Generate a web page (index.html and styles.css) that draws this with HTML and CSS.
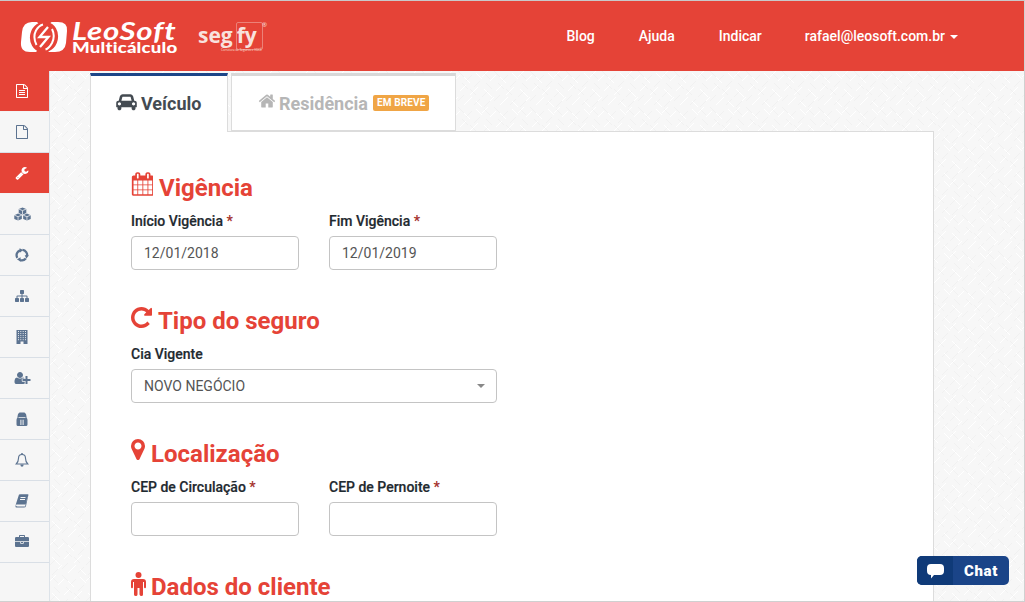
FILE: index.html
```html
<!DOCTYPE html>
<html lang="pt-BR">
<head>
<meta charset="utf-8">
<title>LeoSoft Multicálculo</title>
<link rel="stylesheet" href="styles.css">
</head>
<body>
<div class="app">
  <header class="topbar">
    <div class="brand">
      <svg class="logo-mark" viewBox="0 0 48 30" aria-hidden="true">
        <path fill="#fff" d="M12 0H38Q48 0 47 9L46 21Q45 30 35 30H10Q0 30 1 20L2 10Q3 0 12 0Z"/>
        <ellipse fill="#e54337" cx="24" cy="15" rx="14" ry="15.500" transform="rotate(12 24 15)"/>
        <path fill="#e54337" d="M16 -1H33L29 2H19ZM15 31H30L27 28H18Z"/>
        <path fill="none" stroke="#fff" stroke-width="2" d="M16.500 23Q12.500 15 16 8.500Q19 3.500 23 2.500M32 7Q35.500 14 32 21Q29 26.500 25.500 27.500"/>
        <path fill="none" stroke="#fff" stroke-width="2.300" stroke-linejoin="miter" d="M28 5L19.500 15H28.500L20 25"/>
      </svg>
      <div class="logo-words">
        <span class="logo-top">LeoSoft</span>
        <span class="logo-bottom">Multicálculo</span>
      </div>
      <div class="segfy">
        <span class="segfy-seg">seg</span><span class="segfy-fy">fy</span><span class="segfy-r">®</span>
        <span class="segfy-sub">Corretora de Seguros e VOCÊ</span>
      </div>
    </div>
    <nav class="topnav">
      <a>Blog</a>
      <a>Ajuda</a>
      <a>Indicar</a>
      <a class="user">rafael@leosoft.com.br <i class="caret"></i></a>
    </nav>
  </header>

  <div class="body-row">
    <aside class="sidebar">
      <a class="side-item on"><svg class="ico" viewBox="0 0 1792 1792"><path d="M1596 380q28 28 48 76t20 88v1152q0 40-28 68t-68 28h-1344q-40 0-68-28t-28-68v-1600q0-40 28-68t68-28h896q40 0 88 20t76 48zm-444-244v376h376q-10-29-22-41l-313-313q-12-12-41-22zm384 1528v-1024h-416q-40 0-68-28t-28-68v-416h-768v1536h1280zm-1024-864q0-14 9-23t23-9h704q14 0 23 9t9 23v64q0 14-9 23t-23 9h-704q-14 0-23-9t-9-23v-64zm736 224q14 0 23 9t9 23v64q0 14-9 23t-23 9h-704q-14 0-23-9t-9-23v-64q0-14 9-23t23-9h704zm0 256q14 0 23 9t9 23v64q0 14-9 23t-23 9h-704q-14 0-23-9t-9-23v-64q0-14 9-23t23-9h704z"/></svg></a>
      <a class="side-item"><svg class="ico" viewBox="0 0 1792 1792"><path d="M1596 380q28 28 48 76t20 88v1152q0 40-28 68t-68 28h-1344q-40 0-68-28t-28-68v-1600q0-40 28-68t68-28h896q40 0 88 20t76 48zm-444-244v376h376q-10-29-22-41l-313-313q-12-12-41-22zm384 1528v-1024h-416q-40 0-68-28t-28-68v-416h-768v1536h1280z"/></svg></a>
      <a class="side-item on"><svg class="ico" viewBox="0 0 1792 1792"><path d="M448 1472q0-26-19-45t-45-19-45 19-19 45 19 45 45 19 45-19 19-45zm644-420l-682 682q-37 37-90 37-52 0-91-37l-106-108q-38-36-38-90 0-53 38-91l681-681q39 98 114.500 173.500t173.500 114.500zm634-435q0 39-23 106-47 134-164.500 217.500t-258.500 83.500q-185 0-316.500-131.500t-131.500-316.500 131.500-316.500 316.500-131.500q58 0 121.500 16.500t107.500 46.500q16 11 16 28t-16 28l-293 169v224l193 107q5-3 79-48.500t135.500-81 70.500-35.500q15 0 23.500 10t8.500 25z"/></svg></a>
      <a class="side-item"><svg class="ico ico-wide" viewBox="0 0 18 14"><path d="M9 0L13 1.700V6L9 7.700 5 6V1.700Z"/><path d="M4.300 6.500L8.300 8.200V12.300L4.300 14 .3 12.300V8.200Z"/><path d="M13.700 6.500L17.700 8.200V12.300L13.700 14 9.700 12.300V8.200Z"/><path fill="none" stroke="#f6f6f6" stroke-width=".8" d="M5 1.700L9 3.400 13 1.700M9 3.400V7.700M.3 8.200L4.300 9.900 8.300 8.200M4.300 9.900V14M9.700 8.200L13.700 9.900 17.700 8.200M13.700 9.900V14"/></svg></a>
      <a class="side-item"><svg class="ico" viewBox="0 0 14 14"><g fill="none" stroke="currentColor" stroke-width="2.300"><path d="M2.300 9.800A5.200 5.200 0 0 1 5 2.300"/><path d="M7.500 1.900A5.200 5.200 0 0 1 12 8.300"/><path d="M10.800 10.500A5.200 5.200 0 0 1 5 12"/></g><path d="M4.500 .2L8.200 2 4.800 4.700ZM13.800 7.200L11.400 10.800 9.700 7.200ZM5.600 9.300V13.800L1.900 11.300Z"/></svg></a>
      <a class="side-item"><svg class="ico" viewBox="0 0 1792 1792"><path d="M1792 1248v320q0 40-28 68t-68 28h-320q-40 0-68-28t-28-68v-320q0-40 28-68t68-28h96v-192h-512v192h96q40 0 68 28t28 68v320q0 40-28 68t-68 28h-320q-40 0-68-28t-28-68v-320q0-40 28-68t68-28h96v-192h-512v192h96q40 0 68 28t28 68v320q0 40-28 68t-68 28h-320q-40 0-68-28t-28-68v-320q0-40 28-68t68-28h96v-192q0-52 38-90t90-38h512v-192h-96q-40 0-68-28t-28-68v-320q0-40 28-68t68-28h320q40 0 68 28t28 68v320q0 40-28 68t-68 28h-96v192h512q52 0 90 38t38 90v192h96q40 0 68 28t28 68z"/></svg></a>
      <a class="side-item"><svg class="ico" viewBox="0 0 14 14"><path d="M1.500 0H12.500V14H1.500Z"/><path fill="none" stroke="#f6f6f6" stroke-width=".9" stroke-dasharray="1 1.050" d="M3.500 1V10.500M5.800 1V10.500M8.200 1V10.500M10.500 1V10.500"/><path fill="#f6f6f6" d="M5.500 11.500H8.500V14H5.500Z"/></svg></a>
      <a class="side-item"><svg class="ico ico-wide" viewBox="0 0 2048 1792"><path d="M704 896q-159 0-271.500-112.500t-112.500-271.500 112.500-271.500 271.500-112.500 271.500 112.500 112.500 271.500-112.500 271.500-271.500 112.500zm960 128h352q13 0 22.500 9.500t9.500 22.500v192q0 13-9.500 22.500t-22.500 9.500h-352v352q0 13-9.500 22.500t-22.500 9.500h-192q-13 0-22.500-9.500t-9.500-22.500v-352h-352q-13 0-22.500-9.500t-9.500-22.500v-192q0-13 9.500-22.500t22.500-9.500h352v-352q0-13 9.500-22.500t22.500-9.500h192q13 0 22.500 9.500t9.500 22.500v352zm-736 224q0 52 38 90t90 38h256v238q-68 50-171 50h-874q-121 0-194-69t-73-190q0-53 3.500-103.500t14-109 26.500-108.500 43-97.500 62-81 85.500-53.500 111.500-20q19 0 39 17 79 61 154.500 91.500t164.500 30.500 164.500-30.500 154.500-91.500q20-17 39-17 78 0 133 33t91 95h-229q-52 0-90 38t-38 90v192z"/></svg></a>
      <a class="side-item"><svg class="ico" viewBox="0 0 14 14"><path fill-rule="evenodd" d="M4.500 .5H9.500Q11.500 1.500 11.500 4.500V5.500Q12.500 6.500 12.500 8V12.500Q12.500 14 11 14H3Q1.500 14 1.500 12.500V8Q1.500 6.500 2.500 5.500V4.500Q2.500 1.500 4.500 .5ZM3.500 5.300V6.100H10.500V5.300ZM5.400 7.800V13H6.400V7.800ZM7.600 7.800V13H8.600V7.800Z"/></svg></a>
      <a class="side-item"><svg class="ico" viewBox="0 0 14 14"><path fill="none" stroke="currentColor" stroke-width="1.150" d="M7 1.500C4.500 1.500 3.500 3.300 3.500 5.200C3.500 8 2.700 9.500 1.200 11H12.800C11.300 9.500 10.500 8 10.500 5.200C10.500 3.300 9.500 1.500 7 1.500Z"/><circle cx="7" cy="1" r="1"/><path d="M5.300 11.500H8.700Q8.500 13.700 7 13.700T5.300 11.500Z"/></svg></a>
      <a class="side-item"><svg class="ico" viewBox="0 0 14 14"><path d="M4 .5H13.500L11 12Q10.700 13.500 9 13.500H1.500Q.2 13.500 .5 12L.8 10.700 1 11.500Q1.300 12.500 2.500 12.500H9.500Q10 12.500 10.200 12L12.500 2.500 13 3Z"/><path fill-rule="evenodd" d="M4 .5H13L10.700 10.500H2L.7 10.800ZM5.500 3V4H10.500V3ZM5 5V6H10V5Z"/></svg></a>
      <a class="side-item"><svg class="ico" viewBox="0 0 1792 1792"><path d="M640 256h512v-128h-512v128zm1152 640v480q0 66-47 113t-113 47h-1472q-66 0-113-47t-47-113v-480h672v160q0 26 19 45t45 19h320q26 0 45-19t19-45v-160h672zm-768 0v128h-256v-128h256zm768-480v384h-1792v-384q0-66 47-113t113-47h352v-160q0-40 28-68t68-28h576q40 0 68 28t28 68v160h352q66 0 113 47t47 113z"/></svg></a>
    </aside>

    <main class="content">
      <div class="tabs">
        <a class="tab tab-active">
          <svg class="tab-ico" viewBox="0 0 2048 1792"><path d="M480 1088q0-66-47-113t-113-47-113 47-47 113 47 113 113 47 113-47 47-113zm36-320h1016l-89-357q-2-8-14-17.500t-21-9.500h-768q-9 0-21 9.500t-14 17.500zm1372 320q0-66-47-113t-113-47-113 47-47 113 47 113 113 47 113-47 47-113zm160-96v384q0 14-9 23t-23 9h-96v128q0 80-56 136t-136 56-136-56-56-136v-128h-1024v128q0 80-56 136t-136 56-136-56-56-136v-128h-96q-14 0-23-9t-9-23v-384q0-93 65.500-158.500t158.500-65.500h28l105-419q23-94 104-157.500t179-63.500h768q98 0 179 63.500t104 157.500l105 419h28q93 0 158.500 65.500t65.500 158.500z"/></svg>
          Veículo
        </a>
        <a class="tab tab-off">
          <svg class="tab-ico" viewBox="0 0 1792 1792"><path d="M1472 992v480q0 26-19 45t-45 19h-384v-384h-256v384h-384q-26 0-45-19t-19-45v-480q0-1 .5-3t.5-3l575-474 575 474q1 2 1 6zm223-69l-62 74q-8 9-21 11h-3q-13 0-21-7l-692-577-692 577q-12 8-24 7-13-2-21-11l-62-74q-8-10-7-23.500t11-21.500l719-599q32-26 76-26t76 26l244 204v-195q0-14 9-23t23-9h192q14 0 23 9t9 23v408l219 182q10 8 11 21.500t-7 23.500z"/></svg>
          Residência <span class="soon">EM BREVE</span>
        </a>
      </div>

      <div class="panel">
        <section class="sec">
          <h2 class="sec-head"><svg class="sec-ico ic-cal" viewBox="0 0 1664 1792"><path d="M192 1664h288v-288h-288v288zm352 0h320v-288h-320v288zm-352-352h288v-320h-288v320zm352 0h320v-320h-320v320zm-352-384h288v-288h-288v288zm736 736h320v-288h-320v288zm-384-736h320v-288h-320v288zm768 736h288v-288h-288v288zm-384-352h320v-320h-320v320zm-352-864v-288q0-13-9.500-22.500t-22.500-9.500h-64q-13 0-22.500 9.500t-9.500 22.500v288q0 13 9.500 22.500t22.500 9.500h64q13 0 22.500-9.500t9.500-22.500zm736 864h288v-320h-288v320zm-384-384h320v-288h-320v288zm384 0h288v-288h-288v288zm32-480v-288q0-13-9.500-22.500t-22.500-9.500h-64q-13 0-22.500 9.500t-9.500 22.500v288q0 13 9.500 22.500t22.500 9.500h64q13 0 22.500-9.500t9.500-22.500zm384-64v1280q0 52-38 90t-90 38h-1408q-52 0-90-38t-38-90v-1280q0-52 38-90t90-38h128v-96q0-66 47-113t113-47h64q66 0 113 47t47 113v96h384v-96q0-66 47-113t113-47h64q66 0 113 47t47 113v96h128q52 0 90 38t38 90z"/></svg>Vigência</h2>
          <div class="row">
            <div class="field"><label class="lab">Início Vigência <b class="req">*</b></label><div class="input">12/01/2018</div></div>
            <div class="field"><label class="lab">Fim Vigência <b class="req">*</b></label><div class="input">12/01/2019</div></div>
          </div>
        </section>
        <section class="sec">
          <h2 class="sec-head"><svg class="sec-ico ic-rep" viewBox="128 128 1536 1536"><path d="M1664 256v448q0 26-19 45t-45 19h-448q-42 0-59-40-17-39 14-69l138-138q-148-137-349-137-104 0-198.500 40.500t-163.500 109.500-109.500 163.500-40.500 198.500 40.500 198.500 109.500 163.500 163.500 109.500 198.500 40.500q119 0 225-52t179-147q7-10 23-12 15 0 25 9l137 138q9 8 9.500 20.500t-7.500 22.500q-109 132-264 204.500t-327 72.500q-156 0-298-61t-245-164-164-245-61-298 61-298 164-245 245-164 298-61q147 0 284.500 55.500t244.500 156.500l130-129q29-31 70-14 39 17 39 59z"/></svg>Tipo do seguro</h2>
          <div class="row">
            <div class="field field-wide"><label class="lab">Cia Vigente</label><div class="input input-sel">NOVO NEGÓCIO<i class="sel-caret"></i></div></div>
          </div>
        </section>
        <section class="sec">
          <h2 class="sec-head"><svg class="sec-ico ic-pin" viewBox="384 128 1024 1536"><path d="M1152 640q0-106-75-181t-181-75-181 75-75 181 75 181 181 75 181-75 75-181zm256 0q0 109-33 179l-364 774q-16 33-47.500 52t-67.500 19-67.500-19-46.500-52l-365-774q-33-70-33-179 0-212 150-362t362-150 362 150 150 362z"/></svg>Localização</h2>
          <div class="row">
            <div class="field"><label class="lab">CEP de Circulação <b class="req">*</b></label><div class="input"></div></div>
            <div class="field"><label class="lab">CEP de Pernoite <b class="req">*</b></label><div class="input"></div></div>
          </div>
        </section>
        <section class="sec">
          <h2 class="sec-head"><svg class="sec-ico ic-male" viewBox="0 0 15 24"><circle cx="7.500" cy="3" r="3"/><path d="M3 7H12Q15 7 15 10V15Q15 16.200 14 16.200T13 15V10H12V22.500Q12 24 10.500 24T8.500 22.500V16H6.500V22.500Q6.500 24 4.800 24T3 22.500V10H2V15Q2 16.200 1 16.200T0 15V10Q0 7 3 7Z"/></svg>Dados do cliente</h2>
        </section>
      </div>
    </main>
  </div>

  <button class="chat">
    <span class="chat-ico"><svg viewBox="0 0 17 15"><path d="M4 0H13Q17 0 17 4V7Q17 11 13 11H7L4 14.500V11Q0 11 0 7V4Q0 0 4 0Z"/></svg></span>
    <span class="chat-txt">Chat</span>
  </button>
</div>
</body>
</html>
```

FILE: styles.css
```css
* { box-sizing: border-box; }
html, body { margin: 0; height: 100%; overflow: hidden; }
body { font-family: Roboto, "Liberation Sans", sans-serif; color: #1f2a30; background: #fff; }

.app {
  position: relative;
  height: 602px;
  display: flex;
  flex-direction: column;
  border-top: 1px solid #c9c9c9;
  border-right: 1px solid #d0d0d0;
  border-bottom: 1px solid #d0d0d0;
  overflow: hidden;
}

.topbar {
  flex: 0 0 70px;
  background: #e54337;
  display: flex;
  align-items: center;
  justify-content: space-between;
  padding: 0 66px 0 20px;
  color: #fff;
}
.brand { display: flex; align-items: flex-start; height: 70px; padding-top: 21px; }
.logo-mark { width: 48px; height: 30px; flex: none; }
.logo-words { display: flex; flex-direction: column; width: 82px; margin-left: 4px; font-family: Lato, sans-serif; }
.logo-top { font-size: 24px; line-height: 18px; font-weight: 700; font-style: italic; letter-spacing: .6px; height: 19px; transform: scaleX(1.3); transform-origin: left center; white-space: nowrap; }
.logo-bottom { font-size: 14.500px; line-height: 13px; font-weight: 900; letter-spacing: .15px; transform: scaleX(1.285); transform-origin: left center; white-space: nowrap; }
.segfy { position: relative; margin-left: 44px; font-family: "Open Sans", sans-serif; font-weight: 700; color: #f8e2de; font-size: 21px; line-height: 26px; display: flex; align-items: baseline; width: 68px; }
.segfy-fy { margin-left: 4px; padding: 0 2px 0 0; }
.segfy-fy::after { content: ""; position: absolute; left: 38px; top: 0; width: 25px; height: 26px; border: 1px solid #ec8178; border-radius: 2px; }
.segfy-r { position: absolute; left: 64px; top: -10px; font-size: 6px; font-weight: 400; }
.segfy-sub { position: absolute; left: 23px; top: 26px; font-size: 3px; line-height: 4px; font-weight: 400; white-space: nowrap; }

.topnav { display: flex; align-items: center; gap: 44px; font-size: 14px; font-weight: 500; }
.user { display: inline-flex; align-items: center; gap: 5px; white-space: nowrap; margin-left: -1px; }
.caret { width: 0; height: 0; border-left: 4px solid transparent; border-right: 4px solid transparent; border-top: 4px solid #fff; margin-top: 1px; }

.body-row { flex: 1; min-height: 0; display: flex; }
.sidebar { flex: 0 0 50px; background: #f6f6f6; border-right: 1px solid #dde3e9; display: flex; flex-direction: column; }
.side-item { flex: 0 0 41px; display: flex; align-items: center; justify-content: center; padding-right: 5px; border-bottom: 1px solid #d9dfe6; color: #5c7390; background: #f6f6f6; }
.side-item.on { background: #e54337; color: #fff; border-bottom-color: #f3f3f3; }
.ico { width: 14px; height: 14px; fill: currentColor; display: block; }
.ico-wide { width: 17px; }

.content {
  flex: 1;
  min-width: 0;
  padding: 2px 90px 0 40px;
  background-color: #f7f7f7;
  background-image: url("data:image/svg+xml,%3Csvg xmlns='http://www.w3.org/2000/svg' width='36' height='36'%3E%3Cg fill='none' stroke-width='1'%3E%3Cpath stroke='%23ffffff' d='M0 6L6 0M8 10L14 4M18 6L24 12M30 2L36 8M2 18L10 26M14 20L20 14M24 24L32 16M6 32L12 26M18 34L26 26M30 30L36 36'/%3E%3Cpath stroke='%23f1f1f1' d='M2 2L8 8M12 0L18 6M26 4L20 10M34 10L28 16M4 12L10 18M16 12L22 18M0 26L6 20M12 30L18 24M24 18L30 24M28 34L34 28M2 36L8 30'/%3E%3C/g%3E%3C/svg%3E");
}
.tabs { display: flex; gap: 3px; height: 59px; position: relative; z-index: 1; }
.tab { display: flex; align-items: center; height: 58px; background: #fff; font-size: 18px; font-weight: 700; border: 1px solid #dcdcdc; border-bottom: 0; padding-bottom: 2px; }
.tab-active { width: 138px; height: 59px; border-top: 3px solid #1d4688; color: #444b52; padding-left: 25px; }
.tab-off { width: 225px; border-top: 3px solid #d8d8d8; color: #b6b6b6; padding-left: 26px; border-bottom: 1px solid #dcdcdc; padding-bottom: 0; }
.tab-ico { width: 21px; height: 18px; fill: currentColor; margin-right: 4px; flex: none; margin-top: -3px; }
.tab-off .tab-ico { width: 18px; margin-right: 3px; margin-top: -5px; }
.soon { background: #f0a545; color: #fff; font-size: 10px; line-height: 16px; height: 16px; padding: 0 4px; border-radius: 2px; margin-left: 5px; font-weight: 700; letter-spacing: .12px; white-space: nowrap; }

.panel { margin-top: -1px; background: #fff; border: 1px solid #dcdcdc; height: 600px; width: 844px; padding: 41px 40px 0; }
.sec { height: 133px; }
.sec-head { margin: 0 0 10px; height: 30px; display: flex; align-items: center; font-size: 24px; line-height: 30px; font-weight: 700; color: #e54337; }
.sec-ico { fill: currentColor; flex: none; margin-bottom: 7px; }
.ic-cal { width: 22px; height: 24px; margin-right: 6px; margin-bottom: 8px; }
.ic-rep { width: 21px; height: 21px; margin-right: 6px; margin-bottom: 8px; }
.ic-pin { width: 14px; height: 21px; margin-right: 6px; margin-bottom: 9px; }
.ic-male { width: 15px; height: 24px; margin-right: 5px; margin-bottom: 6px; }

.row { display: flex; gap: 30px; }
.field { width: 168px; }
.field-wide { width: 366px; }
.lab { display: block; font-size: 14px; line-height: 17px; font-weight: 500; margin-bottom: 6px; color: #1f2a30; -webkit-text-stroke: .2px #1f2a30; white-space: nowrap; }
.req { color: #a5322d; font-weight: 700; -webkit-text-stroke: 0; }
.input { position: relative; height: 34px; border: 1px solid #c4c4c4; border-radius: 4px; background: #fff; padding: 0 12px; font-size: 14px; line-height: 32px; color: #555; }
.sel-caret { position: absolute; right: 11px; top: 14px; width: 0; height: 0; border-left: 4px solid transparent; border-right: 4px solid transparent; border-top: 4px solid #888; }

.chat { position: absolute; left: 917px; top: 555px; width: 92px; height: 29px; padding: 0; border: 0; border-radius: 5px; overflow: hidden; display: flex; background: #1a4488; color: #fff; font-family: Roboto, sans-serif; }
.chat-ico { flex: 0 0 36px; height: 29px; background: #0f3a78; display: flex; align-items: center; justify-content: center; }
.chat-ico svg { width: 17px; height: 15px; fill: #fff; display: block; margin-top: 2px; }
.chat-txt { flex: 1; font-size: 15px; font-weight: 900; line-height: 30px; letter-spacing: .6px; text-align: center; }
```
